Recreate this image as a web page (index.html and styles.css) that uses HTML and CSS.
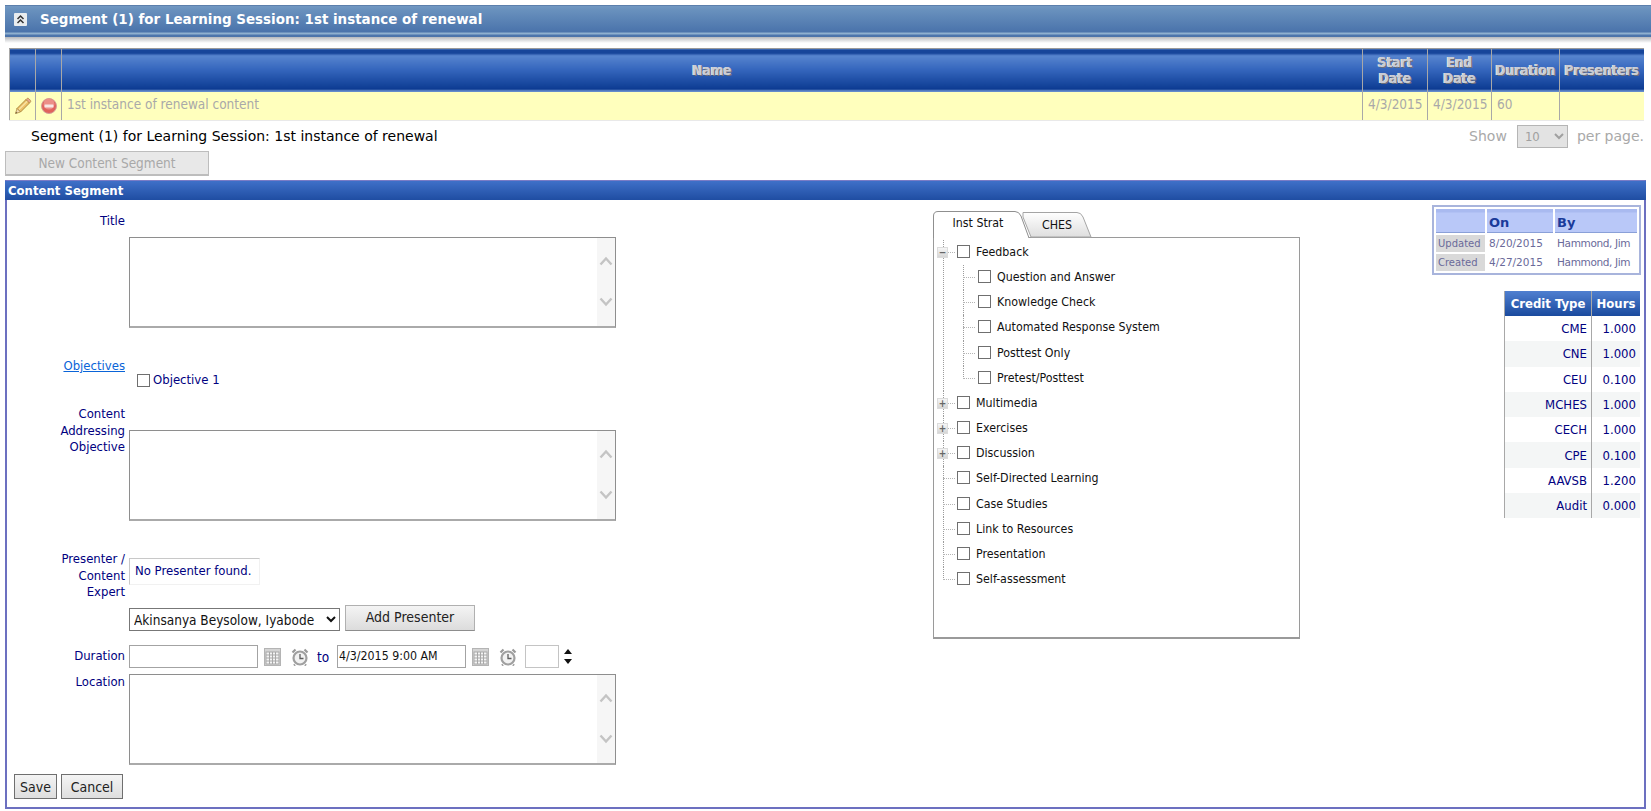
FILE: index.html
```html
<!DOCTYPE html>
<html lang="en">
<head>
<meta charset="utf-8">
<title>Content Segment</title>
<link rel="stylesheet" href="styles.css">
</head>
<body>
<svg class="defs" width="0" height="0" aria-hidden="true">
  <symbol id="up" viewBox="0 0 14 10"><path d="M1.5 8.5 7 2.5l5.5 6" fill="none" stroke="#c4c4c4" stroke-width="2.4"/></symbol>
  <symbol id="down" viewBox="0 0 14 10"><path d="M1.5 1.5 7 7.5l5.500-6" fill="none" stroke="#c4c4c4" stroke-width="2.400"/></symbol>
  <symbol id="cal" viewBox="0 0 17 18">
    <rect x=".5" y=".5" width="16" height="17" fill="#d4d4d4" stroke="#b4b4b4"/>
    <rect x="2" y="4" width="13" height="12" fill="#f4f4f4" stroke="#a8a8a8"/>
    <path d="M5.500 4v12M8.500 4v12M11.500 4v12M2 7h13M2 10h13M2 13h13" stroke="#a8a8a8" fill="none"/>
  </symbol>
  <symbol id="clock" viewBox="0 0 18 18">
    <circle cx="9" cy="10" r="6.500" fill="#f2f2f2" stroke="#a0a0a0" stroke-width="2.200"/>
    <path d="M9 6v4.500h3.500" fill="none" stroke="#5f5f5f" stroke-width="1.300"/>
    <path d="M1.500 4.500 4.500 1.500M16.500 4.500l-3-3M4 16.500l-1 1M14 16.500l1 1" stroke="#9a9a9a" stroke-width="2.200" fill="none"/>
  </symbol>
</svg>

<header class="banner">
  <svg class="banner-icon" viewBox="0 0 13 13" width="13" height="13" aria-hidden="true">
    <rect width="13" height="13" rx="1" fill="#e8ecef"/>
    <path d="M3.500 6 6.500 3l3 3M3.500 10l3-3 3 3" fill="none" stroke="#333" stroke-width="1.500"/>
  </svg>
  <span class="banner-title">Segment (1) for Learning Session: 1st instance of renewal</span>
</header>
<div class="banner-fade"></div>

<table class="grid">
  <colgroup>
    <col class="c-icon"><col class="c-icon"><col class="c-name"><col class="c-start"><col class="c-end"><col class="c-dur"><col class="c-pres">
  </colgroup>
  <thead>
    <tr>
      <th></th><th></th><th>Name</th><th>Start<br>Date</th><th>End<br>Date</th><th>Duration</th><th>Presenters</th>
    </tr>
  </thead>
  <tbody>
    <tr>
      <td class="ico">
        <svg viewBox="0 0 18 18" width="18" height="18" aria-hidden="true">
          <path d="M3 11.500 12 2.500l3.500 3.500L6.500 15z" fill="#edc168" stroke="#b08a3c" stroke-width="1"/>
          <path d="M5 12.500 13.500 4" stroke="#f7e3a6" stroke-width="1.300" fill="none"/>
          <path d="M12 2.500l.8-.8c.7-.6 1.500-.6 2 0l1.500 1.500c.6.600.6 1.400 0 2l-.8.800z" fill="#e8a58e" stroke="#b08a3c" stroke-width=".8"/>
          <path d="M3 11.500 1.500 16.500 6.500 15z" fill="#f0dcb4" stroke="#b08a3c" stroke-width=".8"/>
          <path d="M1.500 16.500 2 14.800l1.500 1.200z" fill="#6a5a3a"/>
        </svg>
      </td>
      <td class="ico">
        <svg viewBox="0 0 16 16" width="16" height="16" aria-hidden="true">
          <circle cx="8" cy="8" r="7.500" fill="#e0625c" stroke="#d3a09a"/>
          <circle cx="8" cy="6" r="5.500" fill="#ec8f88"/>
          <rect x="3.500" y="6.500" width="9" height="3" rx=".5" fill="#f8e6e4"/>
        </svg>
      </td>
      <td>1st instance of renewal content</td>
      <td>4/3/2015</td>
      <td>4/3/2015</td>
      <td>60</td>
      <td></td>
    </tr>
  </tbody>
</table>

<div class="pager">
  <span class="pager-caption">Segment (1) for Learning Session: 1st instance of renewal</span>
  <div class="pager-size">
    <span>Show</span>
    <select class="size-select" disabled><option>10</option></select>
    <span>per page.</span>
  </div>
</div>

<button class="new-btn" type="button" disabled>New Content Segment</button>

<section class="panel">
  <h2 class="panel-head">Content Segment</h2>
  <div class="panel-body">

    <form class="form">
      <div class="row row-title">
        <label class="lbl">Title</label>
      </div>
      <div class="row row-title-box">
        <span class="lbl"></span>
        <div class="tbox">
          <textarea class="tarea"></textarea>
          <div class="track"><svg class="chev"><use href="#up"/></svg><svg class="chev"><use href="#down"/></svg></div>
        </div>
      </div>
      <div class="row row-obj">
        <span class="lbl"><a class="lnk" href="#">Objectives</a></span>
        <label class="obj-item"><span class="cb"></span>Objective 1</label>
      </div>
      <div class="row row-addr">
        <label class="lbl">Content<br>Addressing<br>Objective</label>
        <div class="tbox tbox-addr">
          <textarea class="tarea"></textarea>
          <div class="track"><svg class="chev"><use href="#up"/></svg><svg class="chev"><use href="#down"/></svg></div>
        </div>
      </div>
      <div class="row row-pres">
        <label class="lbl">Presenter /<br>Content<br>Expert</label>
        <div class="nopres">No Presenter found.</div>
      </div>
      <div class="row row-add">
        <span class="lbl"></span>
        <select class="pres-select"><option>Akinsanya Beysolow, Iyabode</option></select>
        <button class="add-btn" type="button">Add Presenter</button>
      </div>
      <div class="row row-dur">
        <label class="lbl">Duration</label>
        <div class="dur">
          <input class="date" type="text">
          <svg class="cal"><use href="#cal"/></svg>
          <svg class="clock"><use href="#clock"/></svg>
          <span class="to">to</span>
          <input class="date" type="text" value="4/3/2015 9:00 AM">
          <svg class="cal"><use href="#cal"/></svg>
          <svg class="clock"><use href="#clock"/></svg>
          <input class="mins" type="text">
          <span class="spin"><i class="spin-up"></i><i class="spin-down"></i></span>
        </div>
      </div>
      <div class="row row-loc">
        <label class="lbl">Location</label>
        <div class="tbox">
          <textarea class="tarea"></textarea>
          <div class="track"><svg class="chev"><use href="#up"/></svg><svg class="chev"><use href="#down"/></svg></div>
        </div>
      </div>
      <div class="actions">
        <button class="act" type="button">Save</button>
        <button class="act" type="button">Cancel</button>
      </div>
    </form>

    <div class="tabs">
      <div class="tab-strip">
        <span class="tab tab-on">
          <svg class="tab-shape" width="98" height="27" aria-hidden="true"><path d="M.5 27V5Q.5 .5 5 .5H82Q86 .5 88 5L96 27" fill="#fff" stroke="#8f8f8f"/></svg>
          <span class="tab-txt">Inst Strat</span>
        </span>
        <span class="tab tab-off">
          <svg class="tab-shape" width="70" height="25" aria-hidden="true">
            <defs><linearGradient id="tabg" x1="0" y1="0" x2="0" y2="1"><stop offset="0" stop-color="#fff"/><stop offset="1" stop-color="#dedede"/></linearGradient></defs>
            <path d="M0 .5H54Q58 .5 60 5L68 25H8L0 5z" fill="url(#tabg)" stroke="#a5a5a5"/>
          </svg>
          <span class="tab-txt">CHES</span>
        </span>
      </div>
      <div class="tab-box">
        <ul class="tree">
          <li class="open"><span class="exp">&minus;</span><span class="cb"></span><span class="txt">Feedback</span>
            <ul class="sub">
              <li><span class="cb"></span><span class="txt">Question and Answer</span></li>
              <li><span class="cb"></span><span class="txt">Knowledge Check</span></li>
              <li><span class="cb"></span><span class="txt">Automated Response System</span></li>
              <li><span class="cb"></span><span class="txt">Posttest Only</span></li>
              <li><span class="cb"></span><span class="txt">Pretest/Posttest</span></li>
            </ul>
          </li>
          <li><span class="exp">+</span><span class="cb"></span><span class="txt">Multimedia</span></li>
          <li><span class="exp">+</span><span class="cb"></span><span class="txt">Exercises</span></li>
          <li><span class="exp">+</span><span class="cb"></span><span class="txt">Discussion</span></li>
          <li><span class="cb"></span><span class="txt">Self-Directed Learning</span></li>
          <li><span class="cb"></span><span class="txt">Case Studies</span></li>
          <li><span class="cb"></span><span class="txt">Link to Resources</span></li>
          <li><span class="cb"></span><span class="txt">Presentation</span></li>
          <li><span class="cb"></span><span class="txt">Self-assessment</span></li>
        </ul>
      </div>
    </div>

    <aside class="side">
      <table class="audit">
        <thead><tr><th></th><th>On</th><th>By</th></tr></thead>
        <tbody>
          <tr><td class="a-l">Updated</td><td>8/20/2015</td><td class="a-by">Hammond, Jim</td></tr>
          <tr><td class="a-l">Created</td><td>4/27/2015</td><td class="a-by">Hammond, Jim</td></tr>
        </tbody>
      </table>
      <table class="credits">
        <thead><tr><th>Credit Type</th><th>Hours</th></tr></thead>
        <tbody>
          <tr><td>CME</td><td>1.000</td></tr>
          <tr><td>CNE</td><td>1.000</td></tr>
          <tr><td>CEU</td><td>0.100</td></tr>
          <tr><td>MCHES</td><td>1.000</td></tr>
          <tr><td>CECH</td><td>1.000</td></tr>
          <tr><td>CPE</td><td>0.100</td></tr>
          <tr><td>AAVSB</td><td>1.200</td></tr>
          <tr><td>Audit</td><td>0.000</td></tr>
        </tbody>
      </table>
    </aside>

  </div>
</section>
</body>
</html>
```

FILE: styles.css
```css
* { box-sizing: border-box; }
html, body { margin: 0; padding: 0; }
body {
  width: 1651px;
  height: 811px;
  overflow: hidden;
  background: #fff;
  padding-top: 5px;
  font-family: "DejaVu Sans Condensed", "DejaVu Sans", sans-serif;
  font-size: 13px;
  color: #000080;
}
.defs { position: absolute; }

/* banner */
.banner {
  margin-left: 5px;
  height: 32px;
  display: flex;
  align-items: center;
  padding: 0 0 5px 9px;
  background: linear-gradient(#7298c2 0, #6a92be 3px, #4a73ab 26px, #8fb0cf 27px, #8fb0cf 28px, #4d76ad 29px, #4a72a8 32px);
  border-top: 1px solid #5c7fac;
}
.banner-icon { flex: none; }
.banner-title {
  margin-left: 13px;
  font: bold 13.45px "DejaVu Sans", sans-serif;
  color: #fff;
  white-space: nowrap;
}
.banner-fade {
  margin-left: 5px;
  height: 6px;
  background: linear-gradient(#b5b8bc, #fff);
}

/* grid */
.grid {
  margin: 5px 0 0 9px;
  width: 1634px;
  table-layout: fixed;
  border-collapse: collapse;
}
.c-icon { width: 26px; }
.c-name { width: 1301px; }
.c-start { width: 65px; }
.c-end { width: 64px; }
.c-dur { width: 68px; }
.c-pres { width: 84px; }
.grid th {
  height: 43px;
  padding: 0;
  border-top: 1px solid #9a9a9a;
  border-left: 1px solid #a8a8a8;
  background: linear-gradient(#17459a 0, #17459a 4px, #5885cf 6px, #3566bd 20px, #103f96 38px, #0c3a8f 40px, #6a90cf 41px, #5c86c8 43px);
  font-weight: bold;
  font-size: 13.5px;
  line-height: 16px;
  color: #c9ccd4;
  text-shadow: 1px 1px 0 #6e6e78, -1px 0 0 #e4e6ea;
}
.grid td {
  height: 29px;
  padding: 0 0 3px 5px;
  border-left: 1px solid #a8a8a8;
  border-bottom: 1px solid #e9e9e9;
  background: #ffffbd;
  font-size: 13.5px;
  color: #a9a9a9;
  white-space: nowrap;
}
.grid td.ico { padding: 0; text-align: center; }
.grid td.ico svg { display: block; margin: 0 auto; }

/* pager */
.pager {
  height: 30px;
  margin-left: 31px;
  width: 1613px;
  display: flex;
  justify-content: space-between;
  align-items: center;
  font-family: "DejaVu Sans", sans-serif;
  font-size: 14px;
  color: #000;
}
.pager-caption { white-space: nowrap; }
.pager-size {
  display: flex;
  align-items: center;
  color: #a9a9a9;
}
.size-select {
  width: 51px;
  height: 23px;
  margin: 0 9px 0 10px;
  padding: 0 0 0 3px;
  border: 1px solid #b5b5b5;
  background-color: #e3e3e3;
  color: #a0a0a0;
  font: 13px "DejaVu Sans Condensed", sans-serif;
  border-radius: 0;
  opacity: 1;
}

/* buttons */
.new-btn {
  display: block;
  margin-left: 5px;
  width: 204px;
  height: 25px;
  border: 1px solid #bdbdbd;
  border-bottom-width: 2px;
  background: #e8e8e8;
  color: #a8a8a8;
  font: 13.5px "DejaVu Sans Condensed", sans-serif;
  padding: 0;
}

/* panel */
.panel {
  margin: 4px 0 0 5px;
  width: 1641px;
  height: 629px;
  border: 2px solid #6c70c0;
  border-top: 1px solid #7a7cc6;
}
.panel-head {
  margin: 0 -2px;
  height: 19px;
  padding-left: 3px;
  background: linear-gradient(#3f70c8, #1f4da2);
  color: #fff;
  font-size: 13px;
  line-height: 19px;
  font-weight: bold;
}
.panel-body { display: flex; align-items: flex-start; }

/* form */
.form { flex: none; width: 609px; display: flex; flex-direction: column; }
.row { display: flex; align-items: flex-start; }
.lbl {
  flex: none;
  display: block;
  width: 118px;
  margin-right: 4px;
  text-align: right;
  line-height: 16.5px;
  color: #000080;
}
.row-title .lbl, .row-obj .lbl, .row-addr .lbl { padding-top: 1px; }
.row-title { margin-top: 12px; height: 16px; }
.row-title-box { margin-top: 9px; }
.row-obj { margin-top: 29px; height: 48px; }
.row-pres { margin-top: 30px; height: 49px; }
.row-add { margin-top: 5px; align-items: flex-end; height: 26px; }
.row-dur { margin-top: 14px; align-items: center; height: 23px; }
.row-loc { margin-top: 6px; }

.tbox {
  display: flex;
  width: 487px;
  height: 91px;
  border: 1px solid #8e8e8e;
  border-bottom: 2px solid #aaa;
  background: #fff;
}
.tbox-addr { margin-top: 25px; }
.tarea {
  flex: 1;
  min-width: 0;
  border: 0;
  padding: 2px;
  resize: none;
  outline: 0;
  overflow: hidden;
}
.track {
  flex: none;
  width: 18px;
  background: #f6f6f6;
  display: flex;
  flex-direction: column;
  justify-content: space-between;
  align-items: center;
  padding: 18px 0 19px;
}
.chev { width: 14px; height: 10px; display: block; }

.lnk { color: #0a64d8; }
.obj-item {
  display: flex;
  align-items: center;
  margin-top: 16px;
  margin-left: 8px;
  color: #000080;
  line-height: 14px;
}
.obj-item .cb { margin-right: 3px; }
.cb {
  flex: none;
  display: inline-block;
  width: 13px;
  height: 13px;
  border: 1px solid #6f6f6f;
  background: #fff;
}

.nopres {
  margin-top: 7px;
  width: 131px;
  height: 27px;
  padding-left: 5px;
  line-height: 24px;
  color: #000080;
  border: 1px solid #f1f1f1;
  border-top: 1px solid #c8c8c8;
  border-left: 1px solid #c8c8c8;
  white-space: nowrap;
}

.pres-select {
  width: 211px;
  height: 23px;
  padding: 0;
  border: 1px solid #777;
  border-radius: 0;
  background-color: #fff;
  color: #111;
  font: 13.5px "DejaVu Sans Condensed", sans-serif;
}
.add-btn {
  margin-left: 5px;
  width: 130px;
  height: 26px;
  border: 1px solid #b0b0b0;
  border-bottom: 1px solid #8d8d8d;
  background: linear-gradient(#f4f4f4, #dcdcdc);
  color: #222;
  font: 14px "DejaVu Sans Condensed", sans-serif;
  padding: 0 0 3px;
}

.dur { display: flex; align-items: center; }
.date {
  width: 129px;
  height: 23px;
  padding: 0 1px 2px;
  border: 1px solid #a3a3a3;
  border-radius: 0;
  background: #fff;
  color: #111;
  font: 12.3px "DejaVu Sans Condensed", sans-serif;
  outline: 0;
}
.cal { width: 17px; height: 18px; margin-left: 6px; flex: none; }
.clock { width: 18px; height: 18px; margin-left: 10px; flex: none; }
.to { margin: 0 8px 0 8px; width: 12px; color: #000080; font-size: 13.5px; }
.mins {
  width: 34px;
  height: 23px;
  margin-left: 8px;
  border: 1px solid #c4c4c4;
  border-radius: 0;
  padding: 0;
  background: #fff;
  outline: 0;
}
.spin { display: flex; flex-direction: column; gap: 5px; margin-left: 5px; }
.spin-up, .spin-down { display: block; width: 0; height: 0; border: 4px solid transparent; }
.spin-up { border-top: 0; border-bottom: 5px solid #111; }
.spin-down { border-bottom: 0; border-top: 5px solid #111; }

.actions { display: flex; gap: 4px; margin: 9px 0 0 7px; }
.act {
  height: 25px;
  padding: 0;
  border: 1px solid #6f6f6f;
  background: linear-gradient(#f4f4f4, #dedede);
  color: #222;
  font: 14px "DejaVu Sans Condensed", sans-serif;
}
.act:first-child { width: 43px; }
.act:last-child { width: 62px; }

/* tabs + tree */
.tabs {
  flex: none;
  width: 367px;
  margin: 10px 0 0 317px;
  color: #111;
}
.tab-strip { display: flex; height: 27px; align-items: flex-end; }
.tab {
  position: relative;
  display: block;
  text-align: center;
  line-height: 26px;
  font-size: 12.3px;
  color: #111;
}
.tab-shape { position: absolute; left: 0; bottom: 0; overflow: visible; }
.tab-txt { position: relative; }
.tab-on { z-index: 1; width: 90px; height: 28px; margin-bottom: -1px; }
.tab-off { width: 68px; height: 25px; }
.tab-box {
  height: 402px;
  padding-top: 2px;
  border: 1px solid #9a9a9a;
  border-bottom-width: 2px;
  background: #fff;
}
.tree, .sub { list-style: none; margin: 0; padding: 0; font-size: 12.3px; }
.tree { margin-left: 9px; }
.tree li {
  position: relative;
  padding-left: 14px;
  line-height: 25.15px;
  white-space: nowrap;
}
.tree > li > .cb, .sub > li > .cb { vertical-align: -2px; margin-right: 6px; }
.tree > li::before {
  content: "";
  position: absolute;
  left: 0;
  top: 0;
  bottom: 0;
  border-left: 1px dotted #9c9c9c;
}
.tree > li:last-child::before { bottom: auto; height: 13px; }
.tree > li::after, .sub > li::after {
  content: "";
  position: absolute;
  left: 0;
  top: 12px;
  width: 12px;
  border-top: 1px dotted #b5b5b5;
}
.sub { margin-left: 6px; }
.sub > li { padding-left: 15px; }
.sub > li::before {
  content: "";
  position: absolute;
  left: 0;
  top: 0;
  bottom: 0;
  border-left: 1px dotted #9c9c9c;
}
.sub > li:last-child::before { bottom: auto; height: 13px; }
.exp {
  position: absolute;
  z-index: 1;
  left: -6px;
  top: 7px;
  width: 11px;
  height: 11px;
  border: 1px solid #dcdcdc;
  background: linear-gradient(#f6f6f6, #d6d6d6);
  color: #666;
  font-size: 10px;
  line-height: 9px;
  font-weight: bold;
  text-align: center;
}

/* side */
.side {
  flex: none;
  width: 209px;
  margin: 5px 0 0 132px;
  display: flex;
  flex-direction: column;
  align-items: flex-end;
}
.audit {
  width: 209px;
  height: 67px;
  border: 2px solid #a8b4dc;
  border-collapse: separate;
  border-spacing: 2px;
  table-layout: fixed;
  font: 10.5px "DejaVu Sans", sans-serif;
  color: #6a6a9a;
}
.audit th {
  height: 24px;
  padding: 3px 0 0 2px;
  background: linear-gradient(#a9baf0 0, #a9baf0 3px, #b9c8f8 4px);
  border-bottom: 1px solid #8aa0d8;
  text-align: left;
  font-size: 13px;
  font-weight: bold;
  color: #1a3a9a;
}
.audit th:first-child { width: 49px; }
.audit th:nth-child(2) { width: 66px; }
.audit td { padding: 0 0 1px 2px; height: 17px; white-space: nowrap; }
.audit td.a-l { background: #d9d9d9; font-size: 10px; }
.audit td.a-by { letter-spacing: -.35px; }
.credits {
  margin: 16px 1px 0 0;
  width: 136px;
  table-layout: fixed;
  border-collapse: collapse;
  font-size: 13px;
  color: #000080;
}
.credits th {
  height: 25px;
  padding: 0;
  background: linear-gradient(#4f7fd0, #1a4a9e);
  color: #fff;
  font-weight: bold;
  border-left: 1px solid #a8a8a8;
}
.credits th:first-child { width: 87px; }
.credits td {
  height: 25.3px;
  padding: 0 4px 0 0;
  text-align: right;
  border-left: 1px solid #a8a8a8;
}
.credits tbody tr:nth-child(even) td { background: #f4f6f6; }
```
